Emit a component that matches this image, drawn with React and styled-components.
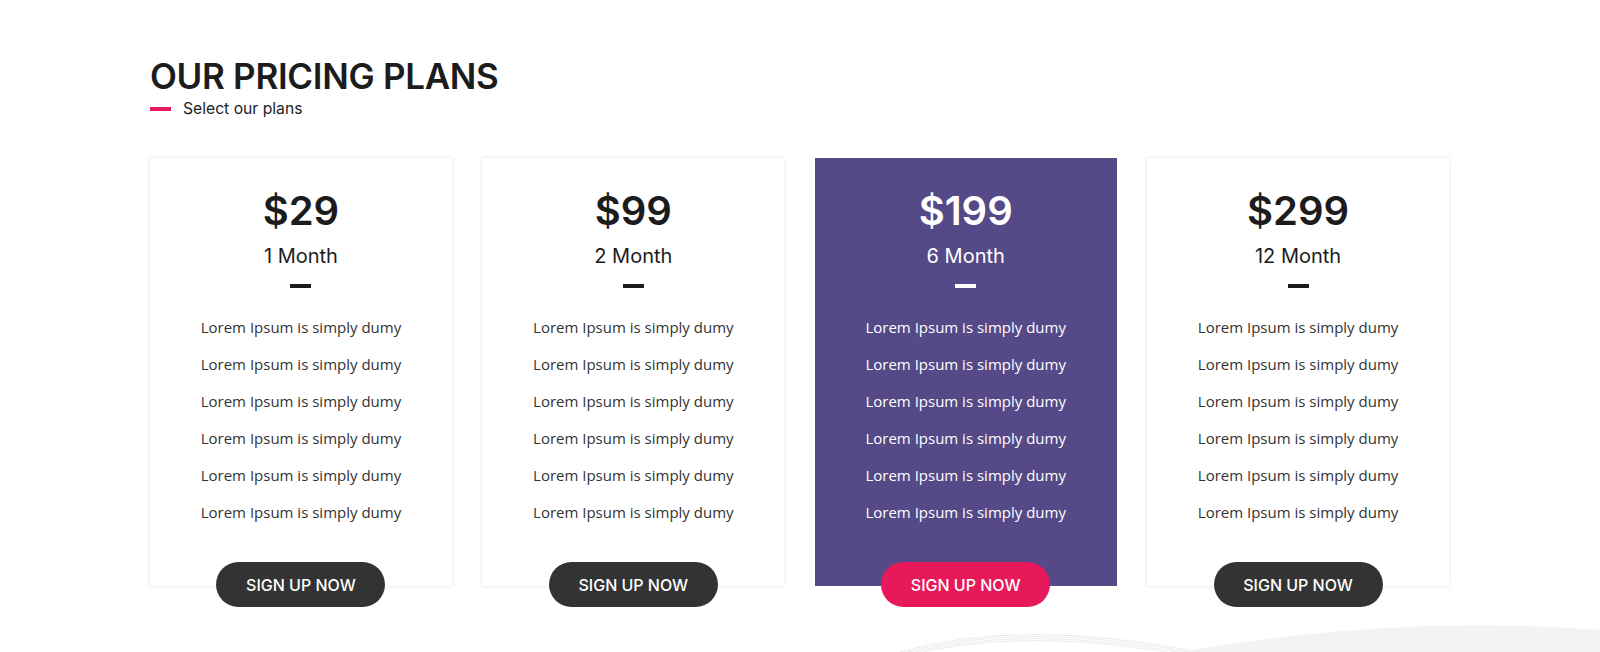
import React from 'react';
import styled, { createGlobalStyle } from 'styled-components';

const GlobalStyle = createGlobalStyle`
  html, body {
    margin: 0;
    padding: 0;
    background: #fff;
  }
  body {
    font-family: "Open Sans", "Liberation Sans", sans-serif;
    overflow: hidden;
  }
`;

const Section = styled.section`
  position: relative;
  height: 652px;
  padding: 56px 0 0 150px;
  box-sizing: border-box;
  overflow: hidden;
`;

const Title = styled.h2`
  margin: 0;
  font-family: "Inter", "Liberation Sans", sans-serif;
  font-size: 35px;
  font-weight: 600;
  line-height: 40px;
  letter-spacing: -0.3px;
  color: #1c1c1c;
`;

const Subtitle = styled.div`
  display: flex;
  align-items: center;
  gap: 12px;
  margin-top: 3px;
  font-family: "Inter", "Liberation Sans", sans-serif;
  font-size: 15.7px;
  line-height: 20px;
  color: #222;
`;

const Dash = styled.span`
  display: block;
  flex: none;
  width: ${(p) => p.$w || 21}px;
  height: 4px;
  background: ${(p) => p.$color};
`;

const Grid = styled.div`
  position: relative;
  z-index: 1;
  display: grid;
  grid-template-columns: repeat(4, 1fr);
  column-gap: 30.5px;
  width: 1299px;
  margin-top: 39px;
`;

const Card = styled.div`
  display: flex;
  flex-direction: column;
  align-items: center;
  padding-top: 29px;
  background: ${(p) => (p.$featured ? '#554a87' : '#fff')};
  box-shadow: ${(p) => (p.$featured ? 'none' : '0 0 4px rgba(0, 0, 0, 0.12)')};
  color: ${(p) => (p.$featured ? '#fff' : '#1c1c1c')};
`;

const Price = styled.div`
  font-family: "Inter", "Liberation Sans", sans-serif;
  font-size: 40px;
  font-weight: 600;
  line-height: 48px;
`;

const Period = styled.div`
  margin-top: 6px;
  margin-bottom: 13px;
  font-family: "Inter", "Liberation Sans", sans-serif;
  font-size: 20px;
  font-weight: 400;
  line-height: 30px;
`;

const Features = styled.ul`
  list-style: none;
  margin: 21px 0 0;
  padding: 0;
  text-align: center;
`;

const Feature = styled.li`
  font-size: 15px;
  line-height: 37px;
  color: ${(p) => (p.$featured ? '#fff' : '#333')};
`;

const SignUp = styled.button`
  margin-top: 31px;
  margin-bottom: -21px;
  width: 169px;
  height: 45px;
  border: none;
  border-radius: 23px;
  background: ${(p) => (p.$featured ? '#e8195a' : '#333')};
  color: #fff;
  font-family: "Inter", "Liberation Sans", sans-serif;
  font-size: 16px;
  font-weight: 500;
  cursor: pointer;
`;

const Decor = styled.svg`
  position: absolute;
  left: 0;
  bottom: 0;
  width: 1600px;
  height: 40px;
  z-index: 0;
`;

const plans = [
  { price: '$29', period: '1 Month' },
  { price: '$99', period: '2 Month' },
  { price: '$199', period: '6 Month', featured: true },
  { price: '$299', period: '12 Month' },
];

const features = Array.from({ length: 6 }, () => 'Lorem Ipsum is simply dumy');

export default function App() {
  return (
    <>
      <GlobalStyle />
      <Section>
        <Title>OUR PRICING PLANS</Title>
        <Subtitle>
          <Dash $color="#e8195a" />
          Select our plans
        </Subtitle>
        <Grid>
          {plans.map((plan) => (
            <Card key={plan.price} $featured={plan.featured}>
              <Price>{plan.price}</Price>
              <Period>{plan.period}</Period>
              <Dash $color={plan.featured ? '#fff' : '#1c1c1c'} />
              <Features>
                {features.map((f, i) => (
                  <Feature key={i} $featured={plan.featured}>{f}</Feature>
                ))}
              </Features>
              <SignUp $featured={plan.featured}>SIGN UP NOW</SignUp>
            </Card>
          ))}
        </Grid>
        <Decor viewBox="0 0 1600 40">
          <path d="M1180 40 Q1400 2 1600 18 L1600 40 Z" fill="#f3f3f3" />
          {[0, 2, 4, 6].map((o) => (
            <path
              key={o}
              d={`M900 ${40 + o} Q1020 ${5 + o} 1200 ${40 + o}`}
              fill="none"
              stroke="#ececec"
              strokeWidth="1"
            />
          ))}
        </Decor>
      </Section>
    </>
  );
}
